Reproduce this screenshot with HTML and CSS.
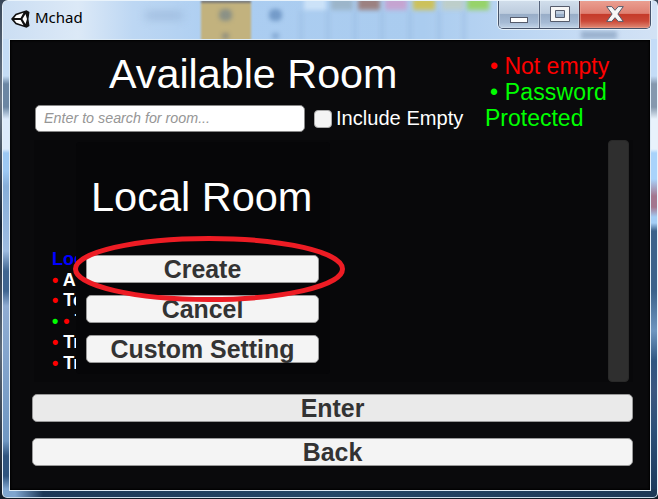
FILE: index.html
```
<!DOCTYPE html>
<html lang="en">
<head>
<meta charset="utf-8">
<title>Mchad</title>
<link rel="stylesheet" href="styles.css">
</head>
<body>
<div class="window">
  <header class="titlebar">
    <div class="glass">
      <i class="smudge s1"></i><i class="tab"></i><i class="glyph g1"></i><i class="glyph g2"></i>
      <i class="cell c1"></i><i class="cell c2"></i><i class="cell c3"></i><i class="cell c4"></i><i class="cell c5"></i><i class="cell c6"></i><i class="cell c7"></i>
      <i class="smudge s2"></i>
    </div>
    <svg class="logo" width="19" height="18" viewBox="0 0 19 18">
      <path d="M0 9 4.500 3.800 15.500.3 18.500 2 17.500 9l1 7-3 1.700L4.500 14.200Z" fill="#111"/>
      <path d="M5.300 5.200 12.500 2.800 9.600 8H3.200ZM3.200 10H9.600l2.900 5.200-7.200-2.400ZM14.500 3.900 16 9l-1.500 5.100L11.400 9Z" fill="#fff"/>
    </svg>
    <span class="title">Mchad</span>
    <div class="controls">
      <span class="ctl min"><svg width="18" height="6"><rect x=".5" y=".5" width="17" height="5" fill="#fff" stroke="#555b6b"/></svg></span>
      <span class="ctl max"><svg width="20" height="16"><path fill-rule="evenodd" d="M.5.5h19v15H.5ZM5.500 4.500v7h9v-7Z" fill="#f7f7f7" stroke="#555b6b"/></svg></span>
      <span class="ctl close"><svg width="18" height="16" viewBox="0 0 18 16"><path d="M.7.6h5.100L9 4.300 12.200.6h5.100L11.900 8l5.400 7.400h-5.100L9 11.700 5.800 15.400H.7L6.100 8Z" fill="#f7f7f7" stroke="#555b6b"/></svg></span>
    </div>
  </header>
  <main class="client">
    <section class="top">
      <div class="left">
        <h1>Available Room</h1>
        <div class="search">
          <div class="field">Enter to search for room...</div>
          <span class="check"></span>
          <span class="label">Include Empty</span>
        </div>
      </div>
      <div class="legend">
        <div class="red in">• Not empty</div>
        <div class="green in wider">• Password</div>
        <div class="green">Protected</div>
      </div>
    </section>
    <section class="rooms">
      <div class="list">
        <div class="local">Loc</div>
        <div><b class="red">•</b> A</div>
        <div><b class="red">•</b> Te</div>
        <div><b class="green">•</b> <b class="red">•</b> <span>T</span></div>
        <div><b class="red">•</b> Tr</div>
        <div><b class="red">•</b> Tr</div>
      </div>
      <div class="scroll"></div>
      <div class="dialog">
        <h2>Local Room</h2>
        <div class="button">Create</div>
        <div class="button">Cancel</div>
        <div class="button">Custom Setting</div>
        <svg class="ring" width="274" height="68"><ellipse cx="137" cy="34" rx="133.500" ry="30.500" fill="none" stroke="#ed1c24" stroke-width="5"/></svg>
      </div>
    </section>
    <div class="button wide enter">Enter</div>
    <div class="button wide back">Back</div>
  </main>
</div>
</body>
</html>
```
FILE: styles.css
```
* { box-sizing: border-box; }
body { margin: 0; width: 658px; height: 499px; overflow: hidden; background: linear-gradient(#39485a, #6c7887 20%, #172536 45%, #5d6a79 70%, #111a26); font-family: "Liberation Sans", Arial, sans-serif; }
.window {
  position: relative; height: 498px; margin-left: 2px; padding: 0 6px 6px 6px;
  display: flex; flex-direction: column; overflow: hidden;
  border: 1px solid #e9f3fb; border-bottom-color: #c8dbea; border-radius: 6px 6px 5px 5px;
  background:
    linear-gradient(90deg, transparent 12px, #1c3857 40px, #244767 330px, #1d3857 640px) bottom / 100% 8px no-repeat,
    linear-gradient(#c4dcf7 0 75px, #8598ae 83px 106px, #e8f2fc 118px 148px, #a9d3fb 152px 178px, #a3768f 195px 206px, #a4cdf5 216px 222px, #3b618a 230px 290px, #6e95bf 330px, #2f5580 360px, #3c567f 390px, #2c4f78 430px, #1d3a5c 490px) right / 8px 100% no-repeat,
    linear-gradient(#c4dcf5 0 75px, #6b86a3 83px 106px, #dceafb 118px 148px, #9cc8f3 152px 170px, #86aed8 185px, #9dbbe0 250px, #3f6590 270px 290px, #8facd2 305px, #6f97c2 440px, #2f547e 455px 475px, #7fa5cf 488px);
}
.titlebar { position: relative; flex: 0 0 38px; margin: 0 -6px; padding: 0 6px 0 8px; display: flex; align-items: flex-start; }
.glass { position: absolute; inset: 0; overflow: hidden; background: linear-gradient(90deg, #cbdef3, #dce9f7 75px, #bdd7f3 130px, #abcdf1 220px, #aaccef 420px, #bcd6f3 520px, #d2e2f5 650px); }
.glass i { position: absolute; filter: blur(2px); }
.glass .s1 { left: 142px; top: 10px; width: 38px; height: 9px; background: #8facd0; opacity: .5; filter: blur(4px); }
.s2 { left: 578px; top: 30px; width: 36px; height: 8px; background: #87a0bf; opacity: .7; }
.glass .tab { left: 198px; top: -1px; width: 50px; height: 44px; background: #c2b27e; border-top: 3px solid #777; filter: blur(1px); }
.glyph { left: 216px; top: 8px; width: 13px; height: 12px; background: #8b9186; border-radius: 5px; box-shadow: 0 21px 0 -3px #918f7e; }
.g2 { left: 266px; background: #749bc9; box-shadow: 0 21px 0 -3px #84a9d4; }
.cell { top: -4px; width: 22px; height: 13px; }
.c1 { left: 301px; background: #cce2f8; } .c2 { left: 328px; background: #9cb5ca; } .c3 { left: 355px; background: #9c8181; }
.c4 { left: 382px; background: #c5a4d1; } .c5 { left: 410px; background: #ccc15c; } .c6 { left: 439px; background: #bdceca; } .c7 { left: 464px; background: #97d36a; }
.cell::after { content: ""; position: absolute; left: -4px; top: 14px; width: 2px; height: 32px; background: #99bce2; }
.logo { position: relative; margin-top: 9px; }
.title { position: relative; margin: 6px 0 0 5px; font: 15px/21px "Noto Sans", sans-serif; color: #000; }
.controls { position: relative; margin-left: auto; display: flex; height: 29px; margin-top: -1px; border: 1px solid #46536a; border-top: 0; border-radius: 0 0 5px 5px; overflow: hidden; box-shadow: 0 0 0 1px #e6f1fb; width: 153px; }
.ctl { display: flex; align-items: center; justify-content: center; background: linear-gradient(#d2dfec, #bdccde 48%, #98adc7 50%, #a5bad4 80%, #c1d3e7); box-shadow: inset 0 0 0 1px #d7e3ef88; }
.min { width: 41px; padding-top: 11px; border-right: 1px solid #56647b; }
.max { width: 40px; border-right: 1px solid #5c3942; }
.close { flex: 1; background: linear-gradient(#eba193, #df8072 48%, #c53a29 50%, #cb4837 75%, #df8b76); box-shadow: inset 0 0 0 1px #f0a99a88; }
.client { flex: 1; min-height: 0; display: flex; flex-direction: column; padding: 0 17px 0 22px; border: 1px solid #dceaf5; background: #0a0a0c; box-shadow: inset 0 0 2px 1px #000; }
.top { height: 100px; display: flex; flex: none; }
.left { width: 453px; }
h1, h2 { margin: 0; font-weight: 400; color: #fff; white-space: nowrap; }
h1 { margin: 10px 0 0 77px; font-size: 41.300px; line-height: 48px; }
.search { display: flex; align-items: center; margin: 7px 0 0 3px; height: 27px; }
.field { width: 270px; height: 27px; padding-left: 8px; border: 1px solid #888; border-radius: 5px; background: #fff; color: #969696; font: italic 14.300px/24px "Liberation Sans", sans-serif; white-space: nowrap; }
.check { width: 18px; height: 18px; margin-left: 9px; border-radius: 4px; background: #f4f4f4; border: 1px solid #aaa; }
.label { margin-left: 4px; color: #fff; font-size: 20.100px; white-space: nowrap; }
.legend { padding-top: 13px; font-size: 23px; line-height: 26px; white-space: nowrap; }
.in { padding-left: 5px; }
.wider { letter-spacing: .15px; }
.red { color: #f00; } .green { color: #0f0; }
.rooms { position: relative; display: flex; flex: none; justify-content: space-between; height: 242px; margin-left: 2px; padding-right: 4px; background: #08080a; }
.list { width: 42px; padding: 109px 0 0 18px; font: bold 18px/20.700px "Liberation Sans", sans-serif; color: #fff; white-space: nowrap; }
.local { color: #00f; }
.scroll { width: 21px; border-radius: 4px; background: #2f2f2f; border: 1px solid #292929; }
.dialog { position: absolute; left: 42px; top: 2px; width: 254px; height: 232px; padding: 31px 11px 0 10px; display: flex; flex-direction: column; gap: 12px; background: #060608; border-radius: 4px; }
h2 { font-size: 41.500px; line-height: 48px; margin: 0 0 22px 5px; }
.button { flex: none; height: 28px; border: 1px solid #999; border-radius: 5px; background: #f4f4f4; color: #333; font-size: 24.900px; font-weight: 700; line-height: 27px; text-align: center; }
.ring { position: absolute; left: -4px; top: 93px; }
.enter { margin-top: 12px; background: #eaeaea; }
.back { margin-top: 16px; }
```
